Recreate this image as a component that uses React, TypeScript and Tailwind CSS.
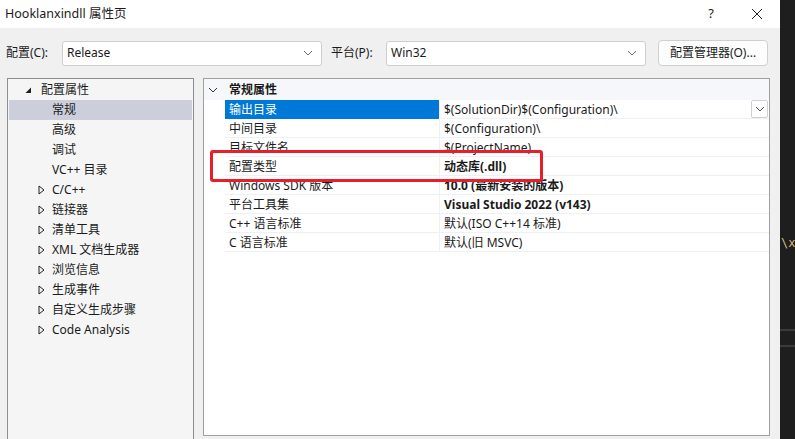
import React from "react";

const font = { fontFamily: '"Noto Sans", "Noto Sans CJK SC", sans-serif' };

type TreeItem = { label: string; level: 0 | 1 | 2; expander?: "open" | "closed"; selected?: boolean };

const tree: TreeItem[] = [
  { label: "配置属性", level: 0, expander: "open" },
  { label: "常规", level: 1, selected: true },
  { label: "高级", level: 1 },
  { label: "调试", level: 1 },
  { label: "VC++ 目录", level: 1 },
  { label: "C/C++", level: 1, expander: "closed" },
  { label: "链接器", level: 1, expander: "closed" },
  { label: "清单工具", level: 1, expander: "closed" },
  { label: "XML 文档生成器", level: 1, expander: "closed" },
  { label: "浏览信息", level: 1, expander: "closed" },
  { label: "生成事件", level: 1, expander: "closed" },
  { label: "自定义生成步骤", level: 1, expander: "closed" },
  { label: "Code Analysis", level: 1, expander: "closed" },
];

const props: { name: string; value: string; bold?: boolean; selected?: boolean }[] = [
  { name: "输出目录", value: "$(SolutionDir)$(Configuration)\\", selected: true },
  { name: "中间目录", value: "$(Configuration)\\" },
  { name: "目标文件名", value: "$(ProjectName)" },
  { name: "配置类型", value: "动态库(.dll)", bold: true },
  { name: "Windows SDK 版本", value: "10.0 (最新安装的版本)", bold: true },
  { name: "平台工具集", value: "Visual Studio 2022 (v143)", bold: true },
  { name: "C++ 语言标准", value: "默认(ISO C++14 标准)" },
  { name: "C 语言标准", value: "默认(旧 MSVC)" },
];

function Chevron({ className = "" }: { className?: string }) {
  return (
    <svg width="10" height="6" viewBox="0 0 10 6" className={className}>
      <path d="M1 1 L5 5 L9 1" fill="none" stroke="currentColor" strokeWidth="1" />
    </svg>
  );
}

function Combo({ value, width }: { value: string; width: string }) {
  return (
    <div className={`${width} h-[25px] bg-white border border-[#cdcdcd] rounded-[3px] flex items-center pl-[4px] pr-[8px]`}>
      <span className="flex-1 text-[#1a1a1a]">{value}</span>
      <Chevron className="text-[#6b6b6b]" />
    </div>
  );
}

export default function App() {
  return (
    <div className="w-[795px] h-[439px] flex overflow-hidden text-[12px] text-[#1b1b1b]" style={font}>
      <div className="w-[780px] shrink-0 h-full flex flex-col bg-[#f0f0f0]">
        {/* title bar */}
        <div className="h-[28px] bg-white flex items-center pl-[5px]">
          <span className="flex-1 text-[12.5px]">Hooklanxindll 属性页</span>
          <span className="w-[20px] text-center text-[13px] mr-[30px]">?</span>
          <svg width="12" height="12" viewBox="0 0 12 12" className="mr-[17px]">
            <path d="M1 1 L11 11 M11 1 L1 11" stroke="#222" strokeWidth="1" />
          </svg>
        </div>

        {/* configuration row */}
        <div className="flex items-center mt-[12px] h-[26px] pl-[6px]">
          <span className="w-[56px]">配置(C):</span>
          <Combo value="Release" width="w-[260px]" />
          <span className="ml-[9px] w-[55px]">平台(P):</span>
          <Combo value="Win32" width="w-[260px]" />
          <button className="ml-[12px] w-[110px] h-[26px] bg-[#fdfdfd] border border-[#cfcfcf] rounded-[4px] text-[#1b1b1b]">
            配置管理器(O)...
          </button>
        </div>

        {/* panels */}
        <div className="flex mt-[12px] flex-1 min-h-0">
          {/* tree */}
          <div className="ml-[7px] w-[187px] h-[370px] bg-[#f5f5f5] border border-[#8c8c94] p-px">
            {tree.map((t) => (
              <div
                key={t.label}
                className={`h-[20px] flex items-center ${t.selected ? "bg-[#cccedb]" : ""}`}
              >
                <span className={`${t.level === 0 ? "w-[32px] pl-[16px]" : "w-[43px] pl-[29px]"} flex items-center`}>
                  {t.expander === "open" && (
                    <svg width="7" height="7" viewBox="0 0 7 7">
                      <path d="M6 0.5 L6 6 L0.5 6 Z" fill="#1e1e1e" />
                    </svg>
                  )}
                  {t.expander === "closed" && (
                    <svg width="7" height="10" viewBox="0 0 7 10">
                      <path d="M1 1 L6 5 L1 9 Z" fill="none" stroke="#1e1e1e" strokeWidth="1" />
                    </svg>
                  )}
                </span>
                <span>{t.label}</span>
              </div>
            ))}
          </div>

          {/* property grid */}
          <div className="ml-[9px] w-[567px] h-[358px] bg-white border border-[#a0a0a0]">
            <div className="h-[21px] flex items-center bg-[#f6f7fa]">
              <span className="w-[25px] pl-[4px] flex items-center">
                <Chevron className="text-[#333]" />
              </span>
              <span className="font-bold">常规属性</span>
            </div>
            {props.map((p) => (
              <div key={p.name} className="h-[19px] flex">
                <div className="w-[21px] shrink-0" />
                <div
                  className={`w-[214px] shrink-0 flex items-center pl-[4px] pt-px border-b ${
                    p.selected ? "bg-[#0078d7] text-white border-[#0078d7]" : "border-[#eef0f4]"
                  }`}
                >
                  {p.name}
                </div>
                <div className="w-px bg-[#eef0f4]" />
                <div className={`flex-1 flex items-center pl-[4px] border-b border-[#eef0f4] ${p.bold ? "font-bold" : ""}`}>
                  <span className="flex-1 pt-px">{p.value}</span>
                  {p.selected && (
                    <span className="w-[17px] h-[18px] mr-px border border-[#d0d0d0] rounded-[2px] bg-white flex items-center justify-center">
                      <Chevron className="text-[#555]" />
                    </span>
                  )}
                </div>
              </div>
            ))}
          </div>
        </div>
      </div>

      {/* editor behind the dialog */}
      <div className="flex-1 min-w-0 overflow-hidden h-full bg-[#1e1e1e] flex flex-col">
        <div className="h-[235px]" />
        <span className="text-[#d7ba7d] text-[12px] leading-[16px] whitespace-nowrap ml-px" style={{ fontFamily: '"DejaVu Sans Mono", monospace' }}>
          \x0
        </span>
        <div className="mt-[78px] h-[2px] bg-[#3a3a3a]" />
        <div className="mt-[14px] h-[2px] bg-[#3a3a3a]" />
      </div>

      {/* annotation box */}
      <div className="absolute left-[210px] top-[150px] w-[333px] h-[32px] border-[3px] border-[#e81e2a] rounded-[3px]" />
    </div>
  );
}
